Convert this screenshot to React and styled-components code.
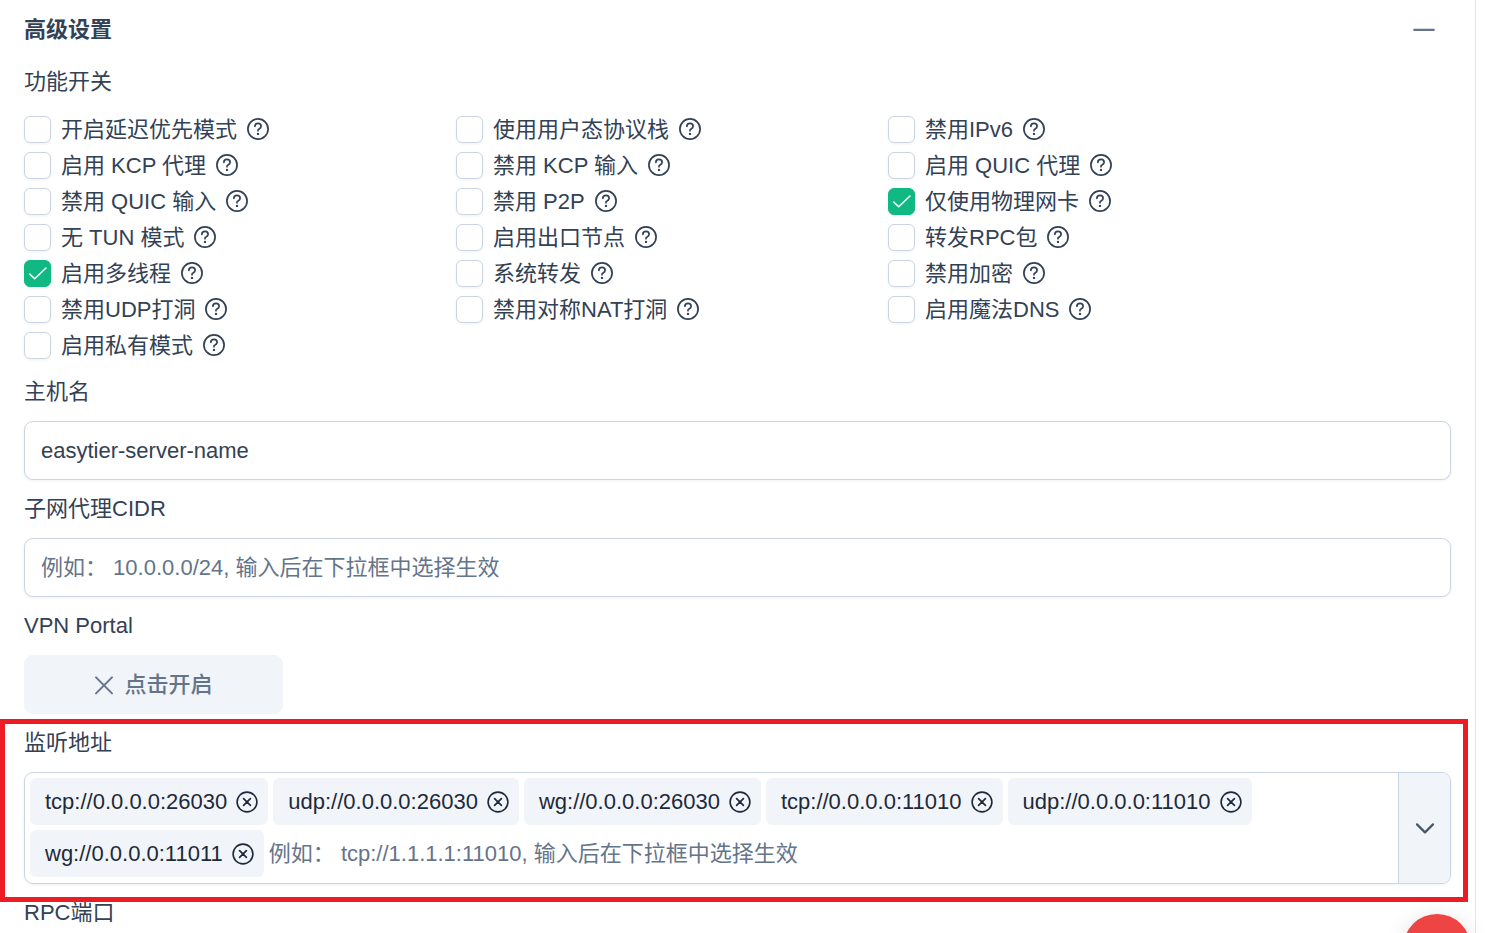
import React, { useState } from 'react';
import styled, { createGlobalStyle } from 'styled-components';

const GlobalStyle = createGlobalStyle`
  * {
    box-sizing: border-box;
  }

  body {
    margin: 0;
    background-color: #ffffff;
    color: #334155;
    font-family: 'Liberation Sans', 'Noto Sans CJK SC', sans-serif;
    font-size: 22px;
    line-height: 33px;
  }

  button,
  input {
    font: inherit;
  }
`;

const Panel = styled.main`
  min-height: 100vh;
  margin-right: 9px;
  padding: 13px 24px 0;
  border-right: 1px solid #e2e8f0;
`;

const Header = styled.header`
  display: flex;
  align-items: center;
  justify-content: space-between;
  margin-bottom: 19px;
`;

const Title = styled.h2`
  margin: 0;
  font-size: 22px;
  font-weight: 700;
`;

const IconButton = styled.button`
  display: flex;
  align-items: center;
  justify-content: center;
  padding: 0;
  border: none;
  background: none;
  color: ${(props) => props.$color || 'inherit'};
  cursor: pointer;
`;

const ToggleButton = styled(IconButton)`
  width: 54px;
  height: 33px;
`;

const Form = styled.form`
  display: flex;
  flex-direction: column;
  gap: 12px;
`;

const Field = styled.div`
  position: relative;
  display: flex;
  flex-direction: column;
  gap: 13px;
`;

const FieldLabel = styled.label`
  align-self: flex-start;
`;

const GroupTitle = styled.div``;

const Flags = styled.div`
  display: flex;
  flex-wrap: wrap;
`;

const Flag = styled.div`
  display: flex;
  align-items: center;
  flex: 0 0 432px;
  gap: 10px;
  height: 36px;
`;

const CheckBox = styled.span`
  display: grid;
  flex: none;
  width: 27px;
  height: 27px;

  & > * {
    grid-area: 1 / 1;
  }

  & > svg {
    pointer-events: none;
    visibility: hidden;
  }

  & > input:checked + svg {
    visibility: visible;
  }
`;

const CheckInput = styled.input`
  appearance: none;
  width: 27px;
  height: 27px;
  margin: 0;
  border: 1px solid #cbd5e1;
  border-radius: 6px;
  background-color: #ffffff;
  box-shadow: 0 1px 3px rgba(18, 18, 23, 0.06);

  &:checked {
    border-color: #10b981;
    background-color: #10b981;
  }
`;

const TextInput = styled.input`
  width: 100%;
  height: 59px;
  padding: 0 16px;
  border: 1px solid #cbd5e1;
  border-radius: 9px;
  background-color: #ffffff;
  color: #334155;
  box-shadow: 0 1px 3px rgba(18, 18, 23, 0.06);
  outline: none;

  &::placeholder {
    color: #64748b;
    opacity: 1;
  }
`;

const PortalButton = styled.button`
  display: flex;
  align-items: center;
  justify-content: center;
  gap: 10px;
  width: 259px;
  height: 59px;
  border: 1px solid #f1f5f9;
  border-radius: 9px;
  background-color: #f1f5f9;
  color: #64748b;
  font-weight: 500;
  cursor: pointer;
`;

const ComboBox = styled.div`
  display: flex;
  border: 1px solid #cbd5e1;
  border-radius: 9px;
  overflow: hidden;
  box-shadow: 0 1px 3px rgba(18, 18, 23, 0.06);
`;

const Chips = styled.div`
  display: flex;
  flex: 1;
  flex-wrap: wrap;
  gap: 5px;
  min-width: 0;
  padding: 5px 5px 6px;
`;

const Chip = styled.span`
  display: flex;
  align-items: center;
  gap: 9px;
  height: 47px;
  padding: 0 10px 0 15px;
  border-radius: 6px;
  background-color: #f1f5f9;
  color: #1e293b;
`;

const ChipInput = styled.input`
  flex: 1;
  min-width: 540px;
  height: 47px;
  padding: 0;
  border: none;
  background: none;
  color: #334155;
  outline: none;

  &::placeholder {
    color: #64748b;
    opacity: 1;
  }
`;

const DropdownButton = styled(IconButton)`
  flex: none;
  width: 52px;
  border-left: 1px solid #cbd5e1;
  background-color: #f1f5f9;
`;

const Highlight = styled.div`
  position: absolute;
  top: -7px;
  right: -17px;
  bottom: -18px;
  left: -24px;
  border: 5px solid #ed1c24;
  pointer-events: none;
`;

const FloatingButton = styled.button`
  position: fixed;
  right: 14px;
  bottom: -49px;
  width: 68px;
  height: 68px;
  border: none;
  border-radius: 50%;
  background-color: #ef4444;
  box-shadow: 0 4px 22px rgba(0, 0, 0, 0.14);
  cursor: pointer;
`;

const Svg = styled.svg`
  display: block;
  flex: none;
  fill: none;
  stroke: currentColor;
  stroke-linecap: round;
  stroke-linejoin: round;
`;

const HelpIcon = () => (
  <Svg width="22" height="22" viewBox="0 0 22 22" strokeWidth="1.7" aria-hidden="true">
    <circle cx="11" cy="11" r="10.1" />
    <path d="M7.9 8.3C7.9 6.5 9.3 5.4 11 5.4s3.1 1.2 3.1 2.9c0 1.4-.9 2.1-2 2.6-.7.3-1.1.7-1.1 1.3v.5" />
    <circle cx="11" cy="15.9" r="1.2" fill="currentColor" stroke="none" />
  </Svg>
);

const RemoveIcon = () => (
  <Svg width="22" height="22" viewBox="0 0 22 22" strokeWidth="1.6" aria-hidden="true">
    <circle cx="11" cy="11" r="9.9" />
    <path d="M7.6 7.6l6.8 6.8M14.4 7.6l-6.8 6.8" strokeWidth="1.7" />
  </Svg>
);

const CheckIcon = () => (
  <Svg width="27" height="27" viewBox="0 0 27 27" color="#ffffff" strokeWidth="1.5" aria-hidden="true">
    <path d="M5.8 14.1l4.9 4.7L22 8" />
  </Svg>
);

const TimesIcon = () => (
  <Svg width="20" height="20" viewBox="0 0 20 20" strokeWidth="2" aria-hidden="true">
    <path d="M2 2.4l16 16M18 2.4l-16 16" />
  </Svg>
);

const MinusIcon = () => (
  <Svg width="22" height="22" viewBox="0 0 22 22" strokeWidth="2.2" aria-hidden="true">
    <path d="M1.2 10.8h19.6" />
  </Svg>
);

const ChevronIcon = () => (
  <Svg width="20" height="20" viewBox="0 0 20 20" strokeWidth="2.2" aria-hidden="true">
    <path d="M2 6.4l8 8 8-8" />
  </Svg>
);

const flags = [
  { id: 'latency_first', label: '开启延迟优先模式' },
  { id: 'use_smoltcp', label: '使用用户态协议栈' },
  { id: 'disable_ipv6', label: '禁用IPv6' },
  { id: 'enable_kcp_proxy', label: '启用 KCP 代理' },
  { id: 'disable_kcp_input', label: '禁用 KCP 输入' },
  { id: 'enable_quic_proxy', label: '启用 QUIC 代理' },
  { id: 'disable_quic_input', label: '禁用 QUIC 输入' },
  { id: 'disable_p2p', label: '禁用 P2P' },
  { id: 'bind_device', label: '仅使用物理网卡', checked: true },
  { id: 'no_tun', label: '无 TUN 模式' },
  { id: 'enable_exit_node', label: '启用出口节点' },
  { id: 'relay_all_peer_rpc', label: '转发RPC包' },
  { id: 'multi_thread', label: '启用多线程', checked: true },
  { id: 'proxy_forward_by_system', label: '系统转发' },
  { id: 'disable_encryption', label: '禁用加密' },
  { id: 'disable_udp_hole_punching', label: '禁用UDP打洞' },
  { id: 'disable_sym_hole_punching', label: '禁用对称NAT打洞' },
  { id: 'enable_magic_dns', label: '启用魔法DNS' },
  { id: 'enable_private_mode', label: '启用私有模式' },
];

const defaultListeners = [
  'tcp://0.0.0.0:26030',
  'udp://0.0.0.0:26030',
  'wg://0.0.0.0:26030',
  'tcp://0.0.0.0:11010',
  'udp://0.0.0.0:11010',
  'wg://0.0.0.0:11011',
];

const App = () => {
  const [listeners, setListeners] = useState(defaultListeners);

  const removeListener = (url) => {
    setListeners(listeners.filter((item) => item !== url));
  };

  return (
    <>
      <GlobalStyle />
      <Panel>
        <Header>
          <Title>高级设置</Title>
          <ToggleButton type="button" aria-label="收起" $color="#64748b">
            <MinusIcon />
          </ToggleButton>
        </Header>
        <Form>
          <Field role="group" aria-labelledby="flags_title">
            <GroupTitle id="flags_title">功能开关</GroupTitle>
            <Flags>
              {flags.map((flag) => (
                <Flag key={flag.id}>
                  <CheckBox>
                    <CheckInput type="checkbox" id={flag.id} defaultChecked={flag.checked} />
                    <CheckIcon />
                  </CheckBox>
                  <label htmlFor={flag.id}>{flag.label}</label>
                  <HelpIcon />
                </Flag>
              ))}
            </Flags>
          </Field>
          <Field>
            <FieldLabel htmlFor="hostname">主机名</FieldLabel>
            <TextInput id="hostname" type="text" defaultValue="easytier-server-name" />
          </Field>
          <Field>
            <FieldLabel htmlFor="subnet_proxy">子网代理CIDR</FieldLabel>
            <TextInput id="subnet_proxy" type="text" placeholder="例如： 10.0.0.0/24, 输入后在下拉框中选择生效" />
          </Field>
          <Field>
            <FieldLabel htmlFor="vpn_portal">VPN Portal</FieldLabel>
            <PortalButton id="vpn_portal" type="button">
              <TimesIcon />
              点击开启
            </PortalButton>
          </Field>
          <Field>
            <FieldLabel htmlFor="listeners">监听地址</FieldLabel>
            <ComboBox>
              <Chips>
                {listeners.map((url) => (
                  <Chip key={url}>
                    {url}
                    <IconButton type="button" aria-label={`移除 ${url}`} onClick={() => removeListener(url)}>
                      <RemoveIcon />
                    </IconButton>
                  </Chip>
                ))}
                <ChipInput id="listeners" type="text" placeholder="例如： tcp://1.1.1.1:11010, 输入后在下拉框中选择生效" />
              </Chips>
              <DropdownButton type="button" aria-label="展开" $color="#475569">
                <ChevronIcon />
              </DropdownButton>
            </ComboBox>
            <Highlight />
          </Field>
          <GroupTitle>RPC端口</GroupTitle>
        </Form>
      </Panel>
      <FloatingButton type="button" aria-label="菜单" />
    </>
  );
};

export default App;
